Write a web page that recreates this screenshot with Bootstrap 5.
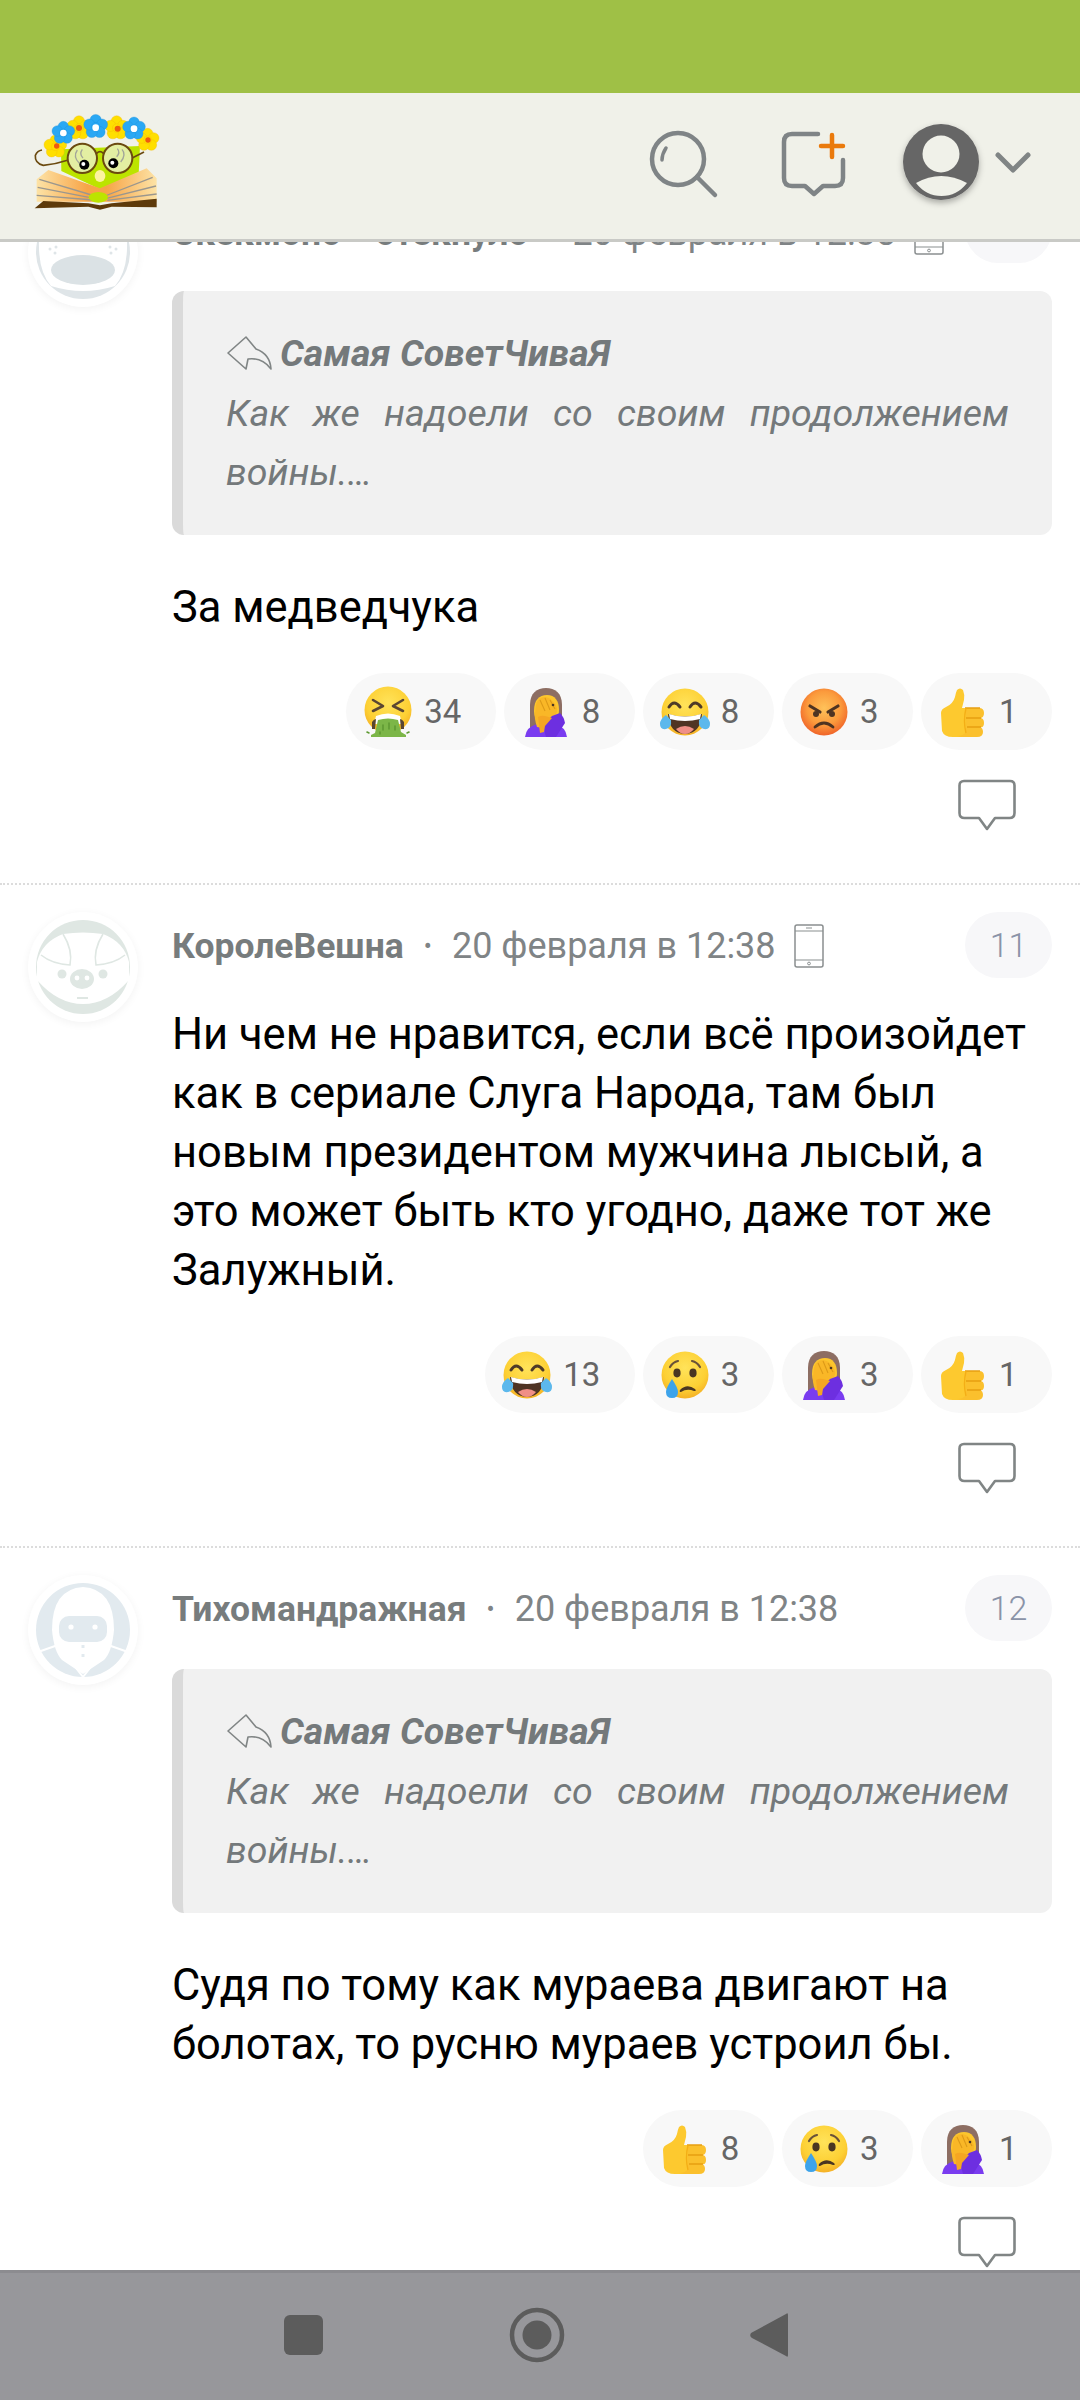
<!DOCTYPE html>
<html lang="ru">
<head>
<meta charset="utf-8">
<title>Комментарии</title>
<link rel="stylesheet" href="https://cdn.jsdelivr.net/npm/bootstrap@5.3.0/dist/css/bootstrap.min.css">
<style>
html,body{margin:0;width:1080px;height:2400px;overflow:hidden;background:#fff}
body{font-family:Roboto,"Liberation Sans",sans-serif;color:#000}
.defs-svg{display:block;width:0;height:0;overflow:hidden}
.screen{width:1080px;height:2400px}
.status-strip{height:93px;background:#9fc046;flex:none}
.top-head{height:149px;flex:none;background:#f0f1e9;border-bottom:3px solid #c9cac6;padding:0;z-index:2;flex-wrap:nowrap}
.logo-svg{width:140px;height:105px;margin:-8px 0 0 30px;display:block}
.head-icons{margin:0 0 8px 0}
.feed{flex:1 1 auto;overflow:hidden;min-height:0}
.feed-inner{margin-top:-72px}
.cmt{padding:27px 28px 52px 0;border-bottom:2px dotted #dcdcdc}
.cmt-last{border-bottom:0}
.ava-col{width:172px;flex:none;padding-left:28px}
.ava{width:110px;height:110px;display:block;border-radius:50%;background:#fff;box-shadow:0 2px 8px rgba(0,0,0,.05)}
.cmt-body{flex:1 1 auto;min-width:0}
.cmt-head{height:66px}
.meta{font-size:36px;color:#7f8486;line-height:66px;white-space:nowrap;padding-top:2px}
.meta-first{padding-top:6px}
.meta b{font-weight:700;color:#777c7d;font-size:35.5px}
.dot{margin:0 20px;font-size:24px;vertical-align:2px}
.dot-tight{margin:0 13px}
.dot-mid{margin:0 18px}
.phone{width:30px;height:44px;margin-left:18px;display:block}
.num-badge{width:87px;height:66px;flex:none;background:#f7f7f9;color:#8a93a8;font-size:34px;font-weight:300;border-radius:33px}
.quote-box{height:244px;margin:28px 0 43px;background:#f1f1f1;border-left:11px solid #dadada;border-radius:12px;padding:42px 43px 0 43px;color:#74797b;font-size:37.5px;line-height:59px;font-style:italic}
.quote-name{font-weight:700;line-height:40px;margin-bottom:11px;display:flex;align-items:center}
.quote-name svg{width:46px;height:38px;margin:0 8px 0 0;flex:none}
.quote-text{text-align:justify;margin:0}
.cmt-text{font-size:43.5px;line-height:59px;margin:27px 0 36px}
.q-next{margin-top:0}
.react{height:77px;background:#f8f8f8;border-radius:38.5px;padding:0 34.5px 0 18px;gap:12px;font-size:33px;color:#666;line-height:1}
.react svg{width:48px;height:50px;display:block;overflow:visible}
symbol{overflow:visible}
.reply-ico{width:58px;height:52px;display:block;margin:29px 36px 0 auto}
.nav-strip{height:130px;flex:none;background:#97979b;border-top:3px solid #8c8c90;z-index:2}
.sys-ico{display:block}
</style>
</head>
<body>
<svg class="defs-svg" xmlns="http://www.w3.org/2000/svg" aria-hidden="true">
<defs>
<radialGradient id="gy" cx="50%" cy="35%" r="65%"><stop offset="0" stop-color="#ffe35a"/><stop offset=".7" stop-color="#fdd034"/><stop offset="1" stop-color="#f5b126"/></radialGradient>
<radialGradient id="go" cx="50%" cy="42%" r="60%"><stop offset="0" stop-color="#ffc25a"/><stop offset=".6" stop-color="#fb9a3c"/><stop offset="1" stop-color="#ef5f28"/></radialGradient>
<linearGradient id="gpage" x1="0" y1="0" x2="1" y2="0"><stop offset="0" stop-color="#fde3a6"/><stop offset=".42" stop-color="#f7a548"/><stop offset=".58" stop-color="#f7a548"/><stop offset="1" stop-color="#fde3a6"/></linearGradient>
<g id="petals"><circle cx="0" cy="-19" r="16"/><circle cx="18" cy="-6" r="16"/><circle cx="11" cy="15" r="16"/><circle cx="-11" cy="15" r="16"/><circle cx="-18" cy="-6" r="16"/><circle r="12"/></g>
<symbol id="e-vomit" viewBox="0 0 48 50">
<circle cx="24" cy="23" r="23.5" fill="url(#gy)"/>
<path d="M9 13l10 6-10 5M39 13l-10 6 10 5" fill="none" stroke="#5a4632" stroke-width="2.600" stroke-linecap="round" stroke-linejoin="round"/>
<path d="M12 29q12-5 24 0l2 8H10z" fill="#fff"/>
<path d="M8 35q2-3 4-3l-1 10H8zM40 35q-2-3-4-3l1 10h3z" fill="#5a4632"/>
<path d="M14 33q10-3 20 0l3 12 5 3v2H7v-2l4-2z" fill="#7cb648"/>
<path d="M19 38v5M25 36v6M31 39v4M16 45v2M3 45l2 1M45 45l-2 1" stroke="#5f9a33" stroke-width="1.600" stroke-linecap="round"/>
</symbol>
<symbol id="e-palm" viewBox="0 0 48 50">
<path d="M8 44V18C8 6 15 1 24 1s16 5 16 17v26z" fill="#8d6e63"/>
<path d="M3 50q1-10 12-13h18q11 3 12 13z" fill="#7a3cf0"/>
<path d="M12 24C12 13 17 8 25 8s12 6 12 15-5 16-12 16-13-6-13-15z" fill="#fcc62d"/>
<path d="M14 18q2-8 9-8 8 1 12 11 1 4-2 7l-8 5-4 8-6-1q-3-9-2-14z" fill="#f9b727"/>
<path d="M18 13l5 11M23 11l5 12M28 13l5 9" stroke="#dd9a18" stroke-width="1.100"/>
<path d="M24 50l-3-12 9-9 8-3q4 4 5 10l-9 14z" fill="#6d2fe0"/>
<path d="M16 30q3-2 7-1l7 2-7 8-1 6-4 1z" fill="#f5a623"/>
<circle cx="31" cy="18" r="1.300" fill="#4a3622"/>
</symbol>
<symbol id="e-joy" viewBox="2 0 48 50">
<circle cx="26" cy="25" r="23.5" fill="url(#gy)"/>
<path d="M10 20q5-8 11 0M31 20q5-8 11 0" fill="none" stroke="#4f3b28" stroke-width="3" stroke-linecap="round"/>
<path d="M9 27q17 5 34 0-1 19-17 20Q10 46 9 27z" fill="#4f3423"/>
<path d="M10 27q16 5 32 0l-1 5q-15 4-30 0z" fill="#fff"/>
<path d="M17 42q9-6 18 0-4 5-9 5t-9-5z" fill="#f08f86"/>
<path d="M1 37q0-5 6-9l5 5q1 8-5 9t-6-5zM51 37q0-5-6-9l-5 5q-1 8 5 9t6-5z" fill="#5cb8ec"/>
</symbol>
<symbol id="e-angry" viewBox="0 0 48 50">
<circle cx="24" cy="25" r="23.5" fill="url(#go)"/>
<path d="M10 19l10 6M38 19l-10 6" stroke="#4e3422" stroke-width="3.200" stroke-linecap="round"/>
<circle cx="16" cy="27" r="3" fill="#4e3422"/><circle cx="32" cy="27" r="3" fill="#4e3422"/>
<path d="M15 40q9-8 18 0" fill="none" stroke="#4e3422" stroke-width="2.800" stroke-linecap="round"/>
</symbol>
<symbol id="e-thumb" viewBox="0 0 48 50">
<path d="M2 26q0-4 5-6 7-3 9-10 1-5 2-7 3-3 6 0 2 5 1 10l-2 8h10v29H14Q5 50 3 44z" fill="#fdc92f"/>
<path d="M27 21h13q5 0 5 5t-4 5q4 0 4 5t-4 4q3 1 3 5 0 5-6 5H25q-4 0-7-1 6 0 9-4z" fill="#fbc02d"/>
<path d="M27 31h15M28 40h14M26 21h15" stroke="#e89f10" stroke-width="1.600" fill="none"/>
<path d="M27 21q-3 13 0 25" stroke="#f4ae16" stroke-width="1.400" fill="none"/>
</symbol>
<symbol id="e-cry" viewBox="0 0 48 50">
<circle cx="24" cy="25" r="23.5" fill="url(#gy)"/>
<path d="M9 17q3-5 8-6M39 17q-3-5-8-6" fill="none" stroke="#6a5238" stroke-width="2.200" stroke-linecap="round"/>
<ellipse cx="16" cy="23" rx="3.600" ry="4.400" fill="#4a3622"/><ellipse cx="32" cy="23" rx="3.600" ry="4.400" fill="#4a3622"/>
<path d="M19 40q7-7 15-1 2 2-1 2-7-3-13 1-2 0-1-2z" fill="#4a3622"/>
<path d="M11 29q-6 9-6 13 0 6 6 6t6-6q0-4-6-13z" fill="#3da3ea"/>
</symbol>
<symbol id="i-reply" viewBox="0 0 58 52">
<path d="M6 2h46q4.500 0 4.500 4.500V34q0 5-5 5H37l-8 11-8-11H6.500q-5 0-5-5V6.500Q1.500 2 6 2z" fill="none" stroke="#808585" stroke-width="2.600" stroke-linejoin="round"/>
</symbol>
<symbol id="i-phone" viewBox="0 0 30 44">
<rect x="1" y="1" width="28" height="42" rx="2" fill="none" stroke="#8a8f90" stroke-width="1.500"/>
<path d="M1 7h28M1 36h28M12 4h6" stroke="#8a8f90" stroke-width="1.200" fill="none"/>
<circle cx="15" cy="39.500" r="1.400" fill="none" stroke="#8a8f90"/>
</symbol>
<symbol id="i-back" viewBox="0 0 46 38">
<path d="M20 3 2 19l18 16 2-10q14-2 23 10-1-15-15-20z" fill="none" stroke="#808585" stroke-width="1.600" stroke-linejoin="round"/>
</symbol>
</defs>
</svg>

<div class="screen d-flex flex-column">
  <div class="status-strip"></div>

  <nav class="navbar top-head d-flex align-items-center justify-content-between">
    <svg class="logo-svg" viewBox="90 60 420 315" role="img" aria-label="Логотип">
      <path d="M183 178 420 168l-4 85-116 45-116-55z" fill="#bce400"/>
      <path d="M110 335V268l35-28 155 55 140-60 30 30v70z" fill="url(#gpage)"/>
      <path d="M118 268 285 318M113 292 282 325M110 316 280 330M458 262 315 318M468 288 320 325M470 312 322 331" stroke="#9b978e" stroke-width="4" fill="none"/>
      <path d="M104 355 130 333l135 7 35 6 35-6 135-14v26l-135-2-35 9-35-9z" fill="#5d3a0a"/>
      <ellipse cx="295" cy="322" rx="29" ry="16" fill="#bce400"/>
      <ellipse cx="300" cy="258" rx="16" ry="18" fill="#fdf3a0"/>
      <path d="M205 210Q170 222 130 226 104 220 106 196 112 182 126 180" fill="none" stroke="#6b4a10" stroke-width="5"/>
      <path d="M395 205 432 186" fill="none" stroke="#6b4a10" stroke-width="5"/>
      <circle cx="247" cy="205" r="44" fill="#e3efa2" stroke="#6b4a10" stroke-width="6"/>
      <circle cx="353" cy="205" r="44" fill="#e3efa2" stroke="#6b4a10" stroke-width="6"/>
      <path d="M290 190q10-10 20 0" fill="none" stroke="#6b4a10" stroke-width="5"/>
      <path d="M232 180q-14 20 6 40M247 178q-10 14 2 26M366 178q14 16-4 38M352 176q10 12-2 24" fill="none" stroke="#a3a69a" stroke-width="4"/>
      <circle cx="253" cy="224" r="15" fill="#000"/><circle cx="250" cy="222" r="6" fill="#fff"/>
      <circle cx="340" cy="220" r="15" fill="#000"/><circle cx="337" cy="218" r="6" fill="#fff"/>
      <g fill="#ffdf00" stroke="#f2b500" stroke-width="1">
        <use href="#petals" transform="translate(166 170) scale(1)"/>
        <use href="#petals" transform="translate(237 114) scale(1.050)"/>
        <use href="#petals" transform="translate(350 114) scale(1.050)"/>
        <use href="#petals" transform="translate(443 150) scale(1)"/>
      </g>
      <g fill="#ef5a10"><circle cx="170" cy="168" r="8"/><circle cx="237" cy="114" r="9"/><circle cx="353" cy="116" r="9"/><circle cx="444" cy="150" r="8"/></g>
      <g fill="#2aa8f4" stroke="#1d8fd8" stroke-width="1">
        <use href="#petals" transform="translate(190 129) scale(1)"/>
        <use href="#petals" transform="translate(287 110) scale(1.050)"/>
        <use href="#petals" transform="translate(402 116) scale(1)"/>
      </g>
      <g fill="#fff"><circle cx="190" cy="129" r="10"/><circle cx="287" cy="113" r="10"/><circle cx="402" cy="116" r="10"/></g>
    </svg>
    <div class="head-icons d-flex">
      <svg class="sys-ico" width="460" height="100" viewBox="620 112 460 100" role="img" aria-label="Действия">
        <circle cx="678" cy="159" r="26" fill="none" stroke="#7f8486" stroke-width="4.500"/>
        <path d="M697 177 715 195" stroke="#7f8486" stroke-width="4.500" stroke-linecap="round"/>
        <path d="M662 160q0-6 4-12" stroke="#7f8486" stroke-width="3.500" stroke-linecap="round" fill="none"/>
        <path d="M818 134H792q-8 0-8 8v36q0 8 8 8h13l9 8 9-8h12q8 0 8-8v-18" fill="none" stroke="#7f8486" stroke-width="4.500" stroke-linecap="round" stroke-linejoin="round"/>
        <path d="M821 146h22M832 135v22" stroke="#ea7a0c" stroke-width="4.500" stroke-linecap="round"/>
        <defs><filter id="sh" x="-20%" y="-20%" width="140%" height="150%"><feDropShadow dx="0" dy="3" stdDeviation="3" flood-color="#000" flood-opacity=".3"/></filter></defs>
        <circle cx="941" cy="162" r="38" fill="#666" filter="url(#sh)"/>
        <circle cx="941" cy="154" r="18.500" fill="#f0f1e9"/>
        <path d="M916 183q25-14 51 0-10 13-25.500 13T916 183z" fill="#f0f1e9"/>
        <path d="M998 155l15 15 15-15" fill="none" stroke="#808585" stroke-width="5" stroke-linecap="round" stroke-linejoin="round"/>
      </svg>
    </div>
  </nav>

  <main class="feed">
    <div class="feed-inner">

      <article class="cmt d-flex">
        <div class="ava-col">
          <svg class="ava" viewBox="0 0 110 110"><circle cx="55" cy="55" r="47" fill="#dfe5e8"/><path d="M11 44Q11 8 55 6q44 2 44 38 1 30-12 45-32 10-64 0Q10 74 11 44z" fill="#fff"/><ellipse cx="55" cy="73" rx="32" ry="15" fill="#dbe2e5"/><g fill="#dfe5e8"><circle cx="22" cy="52" r="1.500"/><circle cx="28" cy="50" r="1.500"/><circle cx="27" cy="56" r="1.500"/><circle cx="88" cy="52" r="1.500"/><circle cx="82" cy="50" r="1.500"/><circle cx="83" cy="56" r="1.500"/></g></svg>
        </div>
        <div class="cmt-body">
          <div class="cmt-head d-flex align-items-center justify-content-between">
            <div class="meta meta-first d-flex align-items-center"><b>Скекмоно</b><span class="dot dot-tight">•</span><b>отекнуло</b><span class="dot dot-mid">•</span><span>20 февраля в 12:38</span><svg class="phone"><use href="#i-phone"/></svg></div>
            <div class="num-badge d-flex align-items-center justify-content-center">10</div>
          </div>
          <div class="quote-box">
            <div class="quote-name"><svg><use href="#i-back"/></svg>Самая СоветЧиваЯ</div>
            <p class="quote-text">Как же надоели со своим продолжением войны.…</p>
          </div>
          <p class="cmt-text q-next">За медведчука</p>
          <div class="d-flex justify-content-end gap-2">
            <div class="react d-flex align-items-center"><svg><use href="#e-vomit"/></svg>34</div>
            <div class="react d-flex align-items-center"><svg><use href="#e-palm"/></svg>8</div>
            <div class="react d-flex align-items-center"><svg><use href="#e-joy"/></svg>8</div>
            <div class="react d-flex align-items-center"><svg><use href="#e-angry"/></svg>3</div>
            <div class="react d-flex align-items-center"><svg><use href="#e-thumb"/></svg>1</div>
          </div>
          <svg class="reply-ico"><use href="#i-reply"/></svg>
        </div>
      </article>

      <article class="cmt d-flex">
        <div class="ava-col">
          <svg class="ava" viewBox="0 0 110 110"><circle cx="55" cy="55" r="47" fill="#dfe7e3"/><path d="M9 50Q14 30 35 22 55 19 75 22 96 30 101 50V68Q55 108 9 68z" fill="#fff"/><path d="M9 68Q30 92 55 92T101 68V60H9z" fill="#fff"/><path d="M35 22Q45 38 42 53 24 52 13 43M75 22Q65 38 68 53 86 52 97 43" fill="none" stroke="#dfe7e3" stroke-width="1.600"/><ellipse cx="54" cy="67" rx="12" ry="10" fill="#dfe7e3"/><circle cx="49" cy="66" r="2.400" fill="#fff"/><circle cx="59" cy="66" r="2.400" fill="#fff"/><circle cx="34" cy="62" r="4.500" fill="#dfe7e3"/><circle cx="75" cy="62" r="4.500" fill="#dfe7e3"/><rect x="49" y="85" width="11" height="2" fill="#dfe7e3"/></svg>
        </div>
        <div class="cmt-body">
          <div class="cmt-head d-flex align-items-center justify-content-between">
            <div class="meta d-flex align-items-center"><b>КоролеВешна</b><span class="dot">•</span><span>20 февраля в 12:38</span><svg class="phone"><use href="#i-phone"/></svg></div>
            <div class="num-badge d-flex align-items-center justify-content-center">11</div>
          </div>
          <p class="cmt-text">Ни чем не нравится, если всё произойдет как в сериале Слуга Народа, там был новым президентом мужчина лысый, а это может быть кто угодно, даже тот же Залужный.</p>
          <div class="d-flex justify-content-end gap-2">
            <div class="react d-flex align-items-center"><svg><use href="#e-joy"/></svg>13</div>
            <div class="react d-flex align-items-center"><svg><use href="#e-cry"/></svg>3</div>
            <div class="react d-flex align-items-center"><svg><use href="#e-palm"/></svg>3</div>
            <div class="react d-flex align-items-center"><svg><use href="#e-thumb"/></svg>1</div>
          </div>
          <svg class="reply-ico"><use href="#i-reply"/></svg>
        </div>
      </article>

      <article class="cmt cmt-last d-flex">
        <div class="ava-col">
          <svg class="ava" viewBox="0 0 110 110"><circle cx="55" cy="55" r="47" fill="#e2eaef"/><path d="M24 55Q24 14 55 12q31 2 31 43-2 22-10 30l-21 14-21-14q-8-8-10-30z" fill="#fff"/><rect x="31" y="41" width="48" height="26" rx="10" fill="#e2eaef"/><circle cx="43" cy="52" r="2.600" fill="#fff"/><circle cx="67" cy="52" r="2.600" fill="#fff"/><path d="M55 70v14" stroke="#e2eaef" stroke-width="3" stroke-dasharray="3 6"/><path d="M10 77 30 70 55 102 80 70 100 77" fill="none" stroke="#fff" stroke-width="2"/></svg>
        </div>
        <div class="cmt-body">
          <div class="cmt-head d-flex align-items-center justify-content-between">
            <div class="meta d-flex align-items-center"><b>Тихомандражная</b><span class="dot">•</span><span>20 февраля в 12:38</span></div>
            <div class="num-badge d-flex align-items-center justify-content-center">12</div>
          </div>
          <div class="quote-box">
            <div class="quote-name"><svg><use href="#i-back"/></svg>Самая СоветЧиваЯ</div>
            <p class="quote-text">Как же надоели со своим продолжением войны.…</p>
          </div>
          <p class="cmt-text q-next">Судя по тому как мураева двигают на болотах, то русню мураев устроил бы.</p>
          <div class="d-flex justify-content-end gap-2">
            <div class="react d-flex align-items-center"><svg><use href="#e-thumb"/></svg>8</div>
            <div class="react d-flex align-items-center"><svg><use href="#e-cry"/></svg>3</div>
            <div class="react d-flex align-items-center"><svg><use href="#e-palm"/></svg>1</div>
          </div>
          <svg class="reply-ico"><use href="#i-reply"/></svg>
        </div>
      </article>
    </div>
  </main>

  <footer class="nav-strip d-flex align-items-center">
    <svg class="sys-ico" width="1080" height="127" viewBox="0 2273 1080 127" role="img" aria-label="Навигация">
      <rect x="284" y="2315" width="39" height="40" rx="6" fill="#5c5c5c"/>
      <circle cx="537" cy="2335" r="25" fill="none" stroke="#5c5c5c" stroke-width="4.500"/>
      <circle cx="537" cy="2335" r="14.500" fill="#5c5c5c"/>
      <path d="M786 2314q2-2 2 1v40q0 3-2 1l-34-18q-3-2-1-5z" fill="#5c5c5c"/>
    </svg>
  </footer>
</div>
<script src="https://cdn.jsdelivr.net/npm/bootstrap@5.3.0/dist/js/bootstrap.bundle.min.js"></script>
</body>
</html>
